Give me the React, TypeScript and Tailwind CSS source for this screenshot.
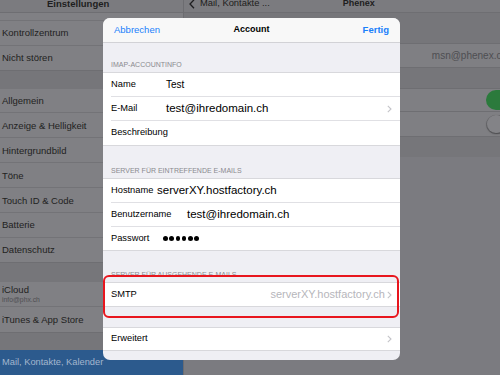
import React from "react";

const font = { fontFamily: '"Liberation Sans", Arial, sans-serif' };

function Chevron({ className = "" }: { className?: string }) {
  return (
    <svg width="5" height="8" viewBox="0 0 5 8" className={className}>
      <polyline points="0.8,0.8 4,4 0.8,7.2" fill="none" stroke="#c4c4c9" strokeWidth="1.1" />
    </svg>
  );
}

type SideItem =
  | { kind: "gap"; h: string }
  | { kind: "row"; label: string; sub?: string; h: string; last?: boolean };

const sideItems: SideItem[] = [
  { kind: "row", label: "", h: "h-[8px]" },
  { kind: "row", label: "Kontrollzentrum", h: "h-[25px]" },
  { kind: "row", label: "Nicht stören", h: "h-[25px]", last: true },
  { kind: "gap", h: "h-[18px]" },
  { kind: "row", label: "Allgemein", h: "h-[25px]" },
  { kind: "row", label: "Anzeige & Helligkeit", h: "h-[25px]" },
  { kind: "row", label: "Hintergrundbild", h: "h-[25px]" },
  { kind: "row", label: "Töne", h: "h-[25px]" },
  { kind: "row", label: "Touch ID & Code", h: "h-[25px]" },
  { kind: "row", label: "Batterie", h: "h-[25px]" },
  { kind: "row", label: "Datenschutz", h: "h-[25px]", last: true },
  { kind: "gap", h: "h-[19px]" },
  { kind: "row", label: "iCloud", sub: "info@phx.ch", h: "h-[26px]" },
  { kind: "row", label: "iTunes & App Store", h: "h-[26px]", last: true },
  { kind: "gap", h: "h-[17px]" },
];

function Sidebar() {
  return (
    <div className="flex w-[184px] shrink-0 flex-col border-r border-[#6c6c70] bg-[#76767a]">
      <div className="h-[13px] overflow-hidden border-b border-[#6e6e72] bg-[#7b7b7f]">
        <div className="-mt-[6px] h-[19px] pl-[47px] text-[9.5px] font-bold leading-[19px] text-[#1e1e20]">
          Einstellungen
        </div>
      </div>
      {sideItems.map((it, i) =>
        it.kind === "gap" ? (
          <div key={i} className={`${it.h} bg-[#76767a]`} />
        ) : (
          <div
            key={i}
            className={`${it.h} flex flex-col justify-center border-b ${
              it.last ? "border-[#6e6e72]" : "border-[#737377]"
            } bg-[#808084] pl-[2px] text-[9.5px] text-[#1f1f21]`}
          >
            <span className="leading-[11px]">{it.label}</span>
            {it.sub && <span className="text-[6.8px] leading-[9px] text-[#4e4e52]">{it.sub}</span>}
          </div>
        )
      )}
      <div className="flex h-[25px] items-center bg-[#2c5a8d] pl-[2px] text-[9.3px] text-[#a3b6cd]">
        Mail, Kontakte, Kalender
      </div>
    </div>
  );
}

function Detail() {
  return (
    <div className="flex flex-1 flex-col bg-[#7b7b80]">
      <div className="flex h-[13px] items-start overflow-hidden border-b border-[#6e6e72] bg-[#7b7b7f]">
        <div className="-mt-[6px] flex h-[19px] w-full items-center text-[#1e1e20]">
          <svg width="6" height="10" viewBox="0 0 6 10" className="ml-[5px]">
            <polyline points="5,0.8 1,5 5,9.2" fill="none" stroke="#1e1e20" strokeWidth="1.3" />
          </svg>
          <span className="ml-[5px] text-[9.4px]">Mail, Kontakte ...</span>
          <span className="ml-[73px] text-[9px] font-bold">Phenex</span>
        </div>
      </div>
      <div className="h-[30px] bg-[#76767a]" />
      <div className="flex h-[25px] items-center justify-end border-y border-[#6e6e72] bg-[#7f7f83]">
        <span className="-mr-[7px] text-[10px] text-[#4e4e52]">msn@phenex.ch</span>
      </div>
      <div className="h-[20px] bg-[#76767a]" />
      <div className="flex h-[24px] items-center justify-end border-t border-b border-[#6e6e72] bg-[#7f7f83]">
        <div className="-mr-[19px] h-[20px] w-[33px] rounded-full bg-[#2b7a3c]" />
      </div>
      <div className="flex h-[25px] items-center justify-end border-b border-[#6e6e72] bg-[#7f7f83]">
        <div className="-mr-[19px] flex h-[19px] w-[33px] items-center rounded-full border border-[#6a6a6e]">
          <div className="h-[18px] w-[18px] rounded-full bg-[#838387] shadow-[0_1px_2px_rgba(0,0,0,0.35)]" />
        </div>
      </div>
      <div className="h-[20px] bg-[#76767a]" />
      <div className="flex-1 bg-[#7b7b80]" />
    </div>
  );
}

function SectionHeader({ h, children }: { h: string; children: React.ReactNode }) {
  return (
    <div className={`${h} flex items-end pb-[3px] pl-[8px] text-[7px] uppercase leading-[9px] text-[#8a8a8f]`}>
      {children}
    </div>
  );
}

function Row({
  h,
  label,
  labelW,
  children,
  sep,
  chevron,
}: {
  h: string;
  label: string;
  labelW?: string;
  children?: React.ReactNode;
  sep?: boolean;
  chevron?: boolean;
}) {
  return (
    <div className={`${h} ml-[8px] flex items-center pr-[8px] ${sep ? "border-b border-[#e0e0e4]" : ""}`}>
      <span className={`${labelW ?? ""} shrink-0 text-[9.3px] text-black`}>{label}</span>
      <div className="flex flex-1 items-center text-[11.5px] text-black">{children}</div>
      {chevron && <Chevron />}
    </div>
  );
}

function Modal() {
  return (
    <div className="absolute left-[103px] top-[18px] flex h-[342px] w-[297px] flex-col overflow-hidden rounded-[7px] bg-[#efeff4]">
      <div className="grid h-[25px] grid-cols-[1fr_auto_1fr] items-center border-b border-[#d2d2d6] bg-[#f8f8f8] px-[11px] text-[9.5px]">
        <span className="text-[#1a80fb]">Abbrechen</span>
        <span className="text-[9px] font-bold text-black">Account</span>
        <span className="justify-self-end font-bold text-[#1a80fb]">Fertig</span>
      </div>

      <SectionHeader h="h-[29px]">IMAP-Accountinfo</SectionHeader>
      <div className="border-y border-[#d8d8dc] bg-white">
        <Row h="h-[24px]" label="Name" labelW="w-[55px]" sep>
          <span className="text-[10px]">Test</span>
        </Row>
        <Row h="h-[24px]" label="E-Mail" labelW="w-[55px]" sep chevron>
          test@ihredomain.ch
        </Row>
        <Row h="h-[24px]" label="Beschreibung" />
      </div>

      <SectionHeader h="h-[32px]">Server für eintreffende E-Mails</SectionHeader>
      <div className="border-y border-[#d8d8dc] bg-white">
        <Row h="h-[24px]" label="Hostname" labelW="w-[46px]" sep>
          serverXY.hostfactory.ch
        </Row>
        <Row h="h-[24px]" label="Benutzername" labelW="w-[76px]" sep>
          test@ihredomain.ch
        </Row>
        <Row h="h-[23px]" label="Passwort" labelW="w-[52px]">
          <div className="flex gap-[1.8px]">
            {[0, 1, 2, 3, 4, 5].map((d) => (
              <span key={d} className="h-[4.5px] w-[4.5px] rounded-full bg-black" />
            ))}
          </div>
        </Row>
      </div>

      <SectionHeader h="h-[31px]">Server für ausgehende E-Mails</SectionHeader>
      <div className="border-y border-[#d8d8dc] bg-white">
        <Row h="h-[23px]" label="SMTP" chevron>
          <span className="ml-auto mr-[2px] text-[11px] text-[#b6b6bb]">serverXY.hostfactory.ch</span>
        </Row>
      </div>

      <div className="h-[20px]" />
      <div className="border-y border-[#d8d8dc] bg-white">
        <Row h="h-[22px]" label="Erweitert" chevron />
      </div>
      <div className="flex-1" />

      <div className="absolute left-0 top-[257px] h-[43px] w-[296px] rounded-[6px] border-2 border-[#e8161e]" />
    </div>
  );
}

export default function App() {
  return (
    <div className="relative flex h-[375px] w-[500px] overflow-hidden" style={font}>
      <Sidebar />
      <Detail />
      <Modal />
    </div>
  );
}
